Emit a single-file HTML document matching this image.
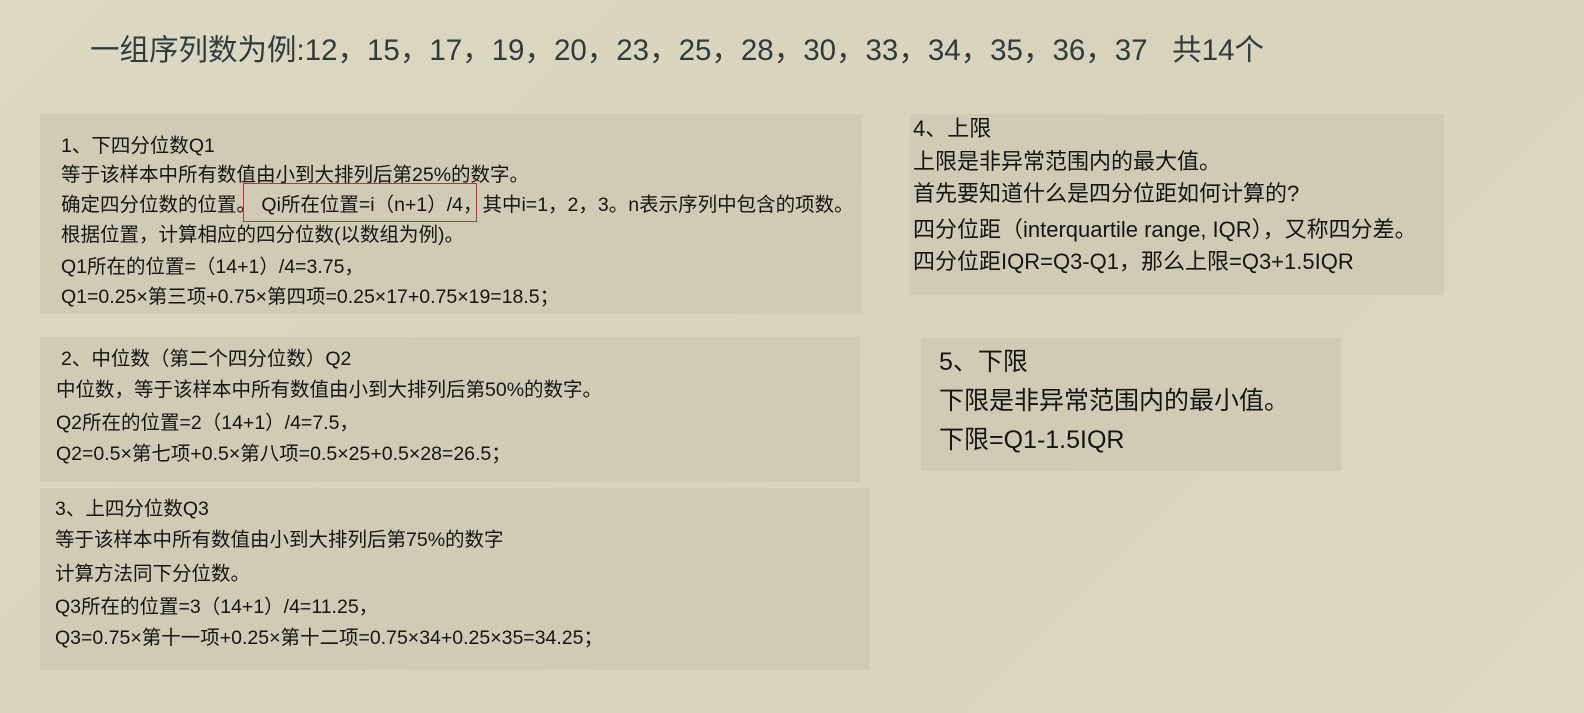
<!DOCTYPE html>
<html><head><meta charset="utf-8"><style>
body{margin:0;width:1584px;height:713px;overflow:hidden;background:linear-gradient(135deg,#ddd8c1,#d9d3bb 50%,#ddd8c3);font-family:"Liberation Sans","Noto Sans CJK SC",sans-serif;color:#141414;position:relative}
.t{position:absolute;left:90px;top:27px;font-size:29.5px;color:#2b3d40;white-space:nowrap}
.b{position:absolute;background:#d1cbb6;white-space:nowrap}
.b div{position:absolute;left:0;line-height:1.15}
</style></head><body>
<div class="t">一组序列数为例:12，15，17，19，20，23，25，28，30，33，34，35，36，37&nbsp;&nbsp;&nbsp;共14个</div>

<div class="b" style="left:40px;top:114px;width:822px;height:200px;font-size:19.5px">
<div style="left:21px;top:21px">1、下四分位数Q1</div>
<div style="left:21px;top:50px">等于该样本中所有数值由小到大排列后第25%的数字。</div>
<div style="left:21px;top:80px">确定四分位数的位置。 Qi所在位置=i（n+1）/4，其中i=1，2，3。n表示序列中包含的项数。</div>
<div style="left:21px;top:110px">根据位置，计算相应的四分位数(以数组为例)。</div>
<div style="left:21px;top:142px">Q1所在的位置=（14+1）/4=3.75，</div>
<div style="left:21px;top:172px">Q1=0.25×第三项+0.75×第四项=0.25×17+0.75×19=18.5；</div>
<div style="left:203px;top:69px;width:232px;height:37px;border:1px solid #d42a2a"></div>
</div>

<div class="b" style="left:40px;top:337px;width:820px;height:145px;font-size:19.5px">
<div style="left:21px;top:11px">2、中位数（第二个四分位数）Q2</div>
<div style="left:16px;top:42px">中位数，等于该样本中所有数值由小到大排列后第50%的数字。</div>
<div style="left:16px;top:75px">Q2所在的位置=2（14+1）/4=7.5，</div>
<div style="left:16px;top:106px">Q2=0.5×第七项+0.5×第八项=0.5×25+0.5×28=26.5；</div>
</div>

<div class="b" style="left:40px;top:488px;width:830px;height:182px;font-size:19.5px">
<div style="left:15px;top:10px">3、上四分位数Q3</div>
<div style="left:15px;top:41px">等于该样本中所有数值由小到大排列后第75%的数字</div>
<div style="left:15px;top:75px">计算方法同下分位数。</div>
<div style="left:15px;top:108px">Q3所在的位置=3（14+1）/4=11.25，</div>
<div style="left:15px;top:139px">Q3=0.75×第十一项+0.25×第十二项=0.75×34+0.25×35=34.25；</div>
</div>

<div class="b" style="left:910px;top:114px;width:534px;height:181px;font-size:22px">
<div style="left:3px;top:2px">4、上限</div>
<div style="left:3px;top:35px">上限是非异常范围内的最大值。</div>
<div style="left:3px;top:67px">首先要知道什么是四分位距如何计算的?</div>
<div style="left:3px;top:103px">四分位距（interquartile range, IQR），又称四分差。</div>
<div style="left:3px;top:135px">四分位距IQR=Q3-Q1，那么上限=Q3+1.5IQR</div>
</div>

<div class="b" style="left:921px;top:338px;width:420px;height:133px;font-size:25px">
<div style="left:18px;top:10px">5、下限</div>
<div style="left:18px;top:49px">下限是非异常范围内的最小值。</div>
<div style="left:18px;top:88px">下限=Q1-1.5IQR</div>
</div>
</body></html>
